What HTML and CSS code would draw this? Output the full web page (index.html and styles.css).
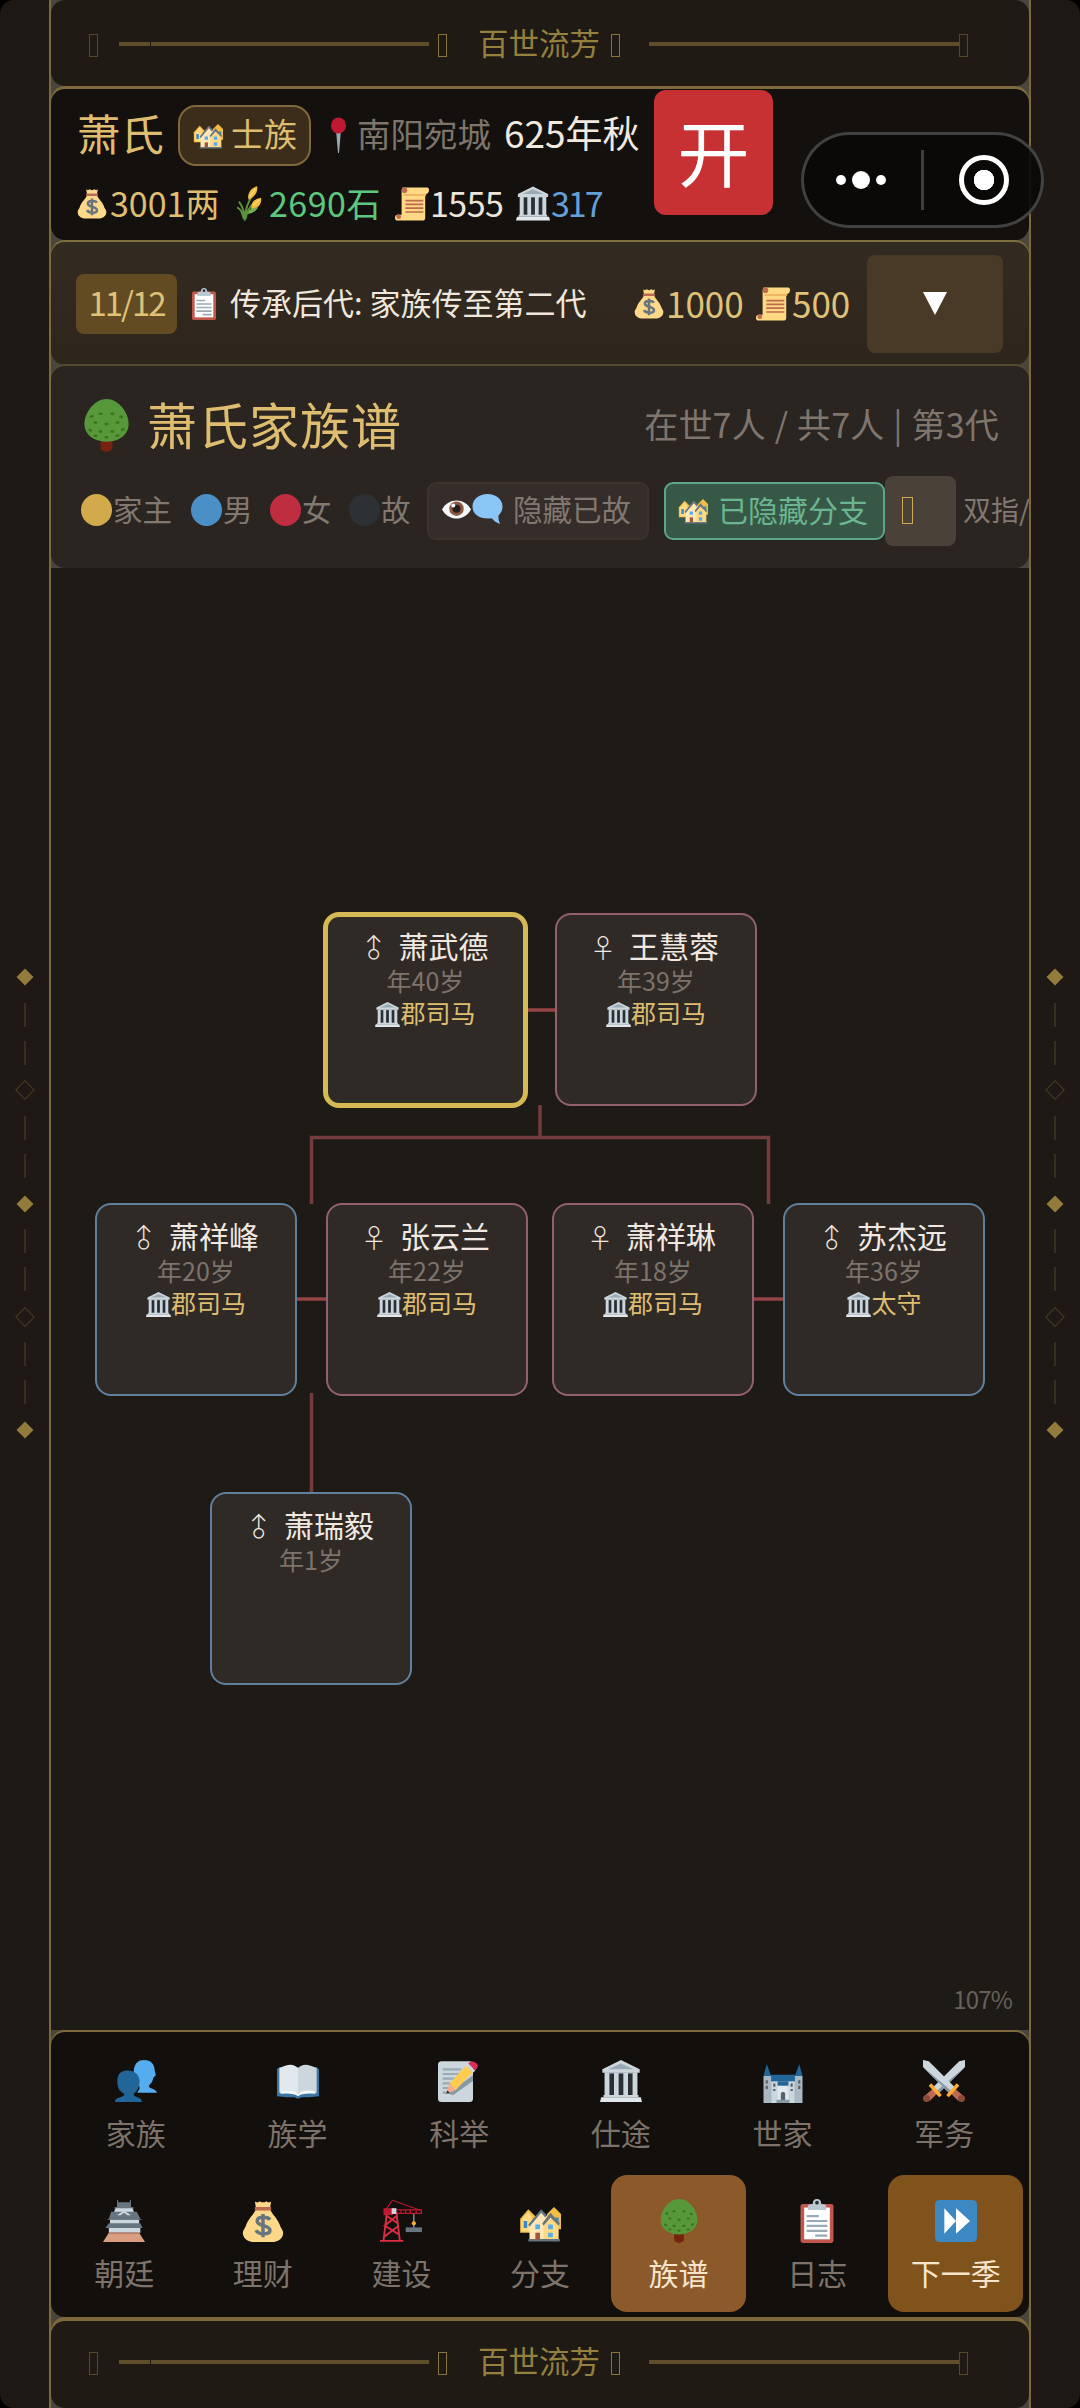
FILE: index.html
```html
<!DOCTYPE html>
<html lang="zh-CN">
<head>
    <meta charset="UTF-8">
    <meta name="viewport" content="width=device-width, initial-scale=1.0">
    <title>百世流芳</title>
    <link rel="stylesheet" href="styles.css">
</head>
<body>
    <svg class="sprite" aria-hidden="true">
        <symbol id="houses" viewBox="0 0 36 36">
            <path fill="#f4bd42" d="M1 16l7-8 6 6v14H1z"/>
            <path fill="#ffd983" d="M2 17l6-7 3 4v13H2z"/>
            <path fill="#f4bd42" d="M24 12l6-6 6 6v13H24z"/>
            <path fill="#3b88c3" d="M4 18h3v6H4zM31 15h3v4h-3z"/>
            <path fill="#ffe8b6" d="M9 34V20l10-11 5 5v20z"/>
            <path fill="#ffd983" d="M21 34V20l6-7 7 8v13z"/>
            <path fill="#66757f" d="M8 21L19 8l5 5-1.500 2L19 11 9 23zM20 20l7-9 8 9-1 2-7-7-6 7zM8 33.500h27v2H8z"/>
            <path fill="#55acee" d="M14 21h4v4h-4zM25 21h4v4h-4zM25 28h4v4h-4z"/>
            <path fill="#a0573f" d="M14 28h4v6h-4z"/>
        </symbol>
        <symbol id="pin" viewBox="0 0 15 36">
            <path fill="#99aab5" d="M5 13h5L8 36H7z"/>
            <ellipse cx="7.500" cy="8.500" rx="7.500" ry="8" fill="#be1931"/>
        </symbol>
        <symbol id="bag" viewBox="0 0 36 36">
            <path fill="#fdd888" d="M12 8h12c2 5 7 8 9 15 1 2 3 4 2 7-1 4-5 6-9 6H10c-4 0-8-2-9-6-1-3 1-5 2-7 2-7 7-10 9-15z"/>
            <path fill="#fdd888" d="M11 1q2 2 4 0 3 2 6 0 2 2 4 0l-1 6H12z"/>
            <path fill="#bf6952" d="M11 6h14v3H11z"/>
            <path fill="none" stroke="#67757f" stroke-width="3" d="M24 17c-2-3-11-3-11 1 0 5 11 3 11 8 0 4-10 4-12 0M18 12v20"/>
        </symbol>
        <symbol id="wheat" viewBox="0 0 26 36">
            <path fill="none" stroke="#5c913b" stroke-width="2" d="M8 36C8 25 11 16 18 7M8 36c0-8-2-15-6-20M9 34c1-8 5-13 9-17M7 34C5 26 4 24 0 22"/>
            <path fill="#f4bd42" d="M12 14C10 7 16 1 21 0c1 6-3 12-9 14zM15 24c-1-8 4-11 10-12 1 7-3 11-10 12z"/>
            <path fill="#77b255" d="M11 29c1-5 6-7 11-7-2 4-6 6-11 7z"/>
            <path fill="none" stroke="#ffe8a0" d="M13 11l6-8M17 20l6-6"/>
        </symbol>
        <symbol id="scroll" viewBox="0 0 36 36">
            <path fill="#ffd983" d="M8 1h26q2 0 2 3t-3 4h-1v25q0 3-3 3H3q-3 0-3-3t3-3h4V4z"/>
            <path fill="#f0b45f" d="M9 8h24v2H9z"/>
            <circle cx="10" cy="4" r="3" fill="#c1694f"/>
            <circle cx="4" cy="32" r="2.500" fill="#c1694f"/>
            <path fill="none" stroke="#c1694f" stroke-width="1.800" d="M11 15h19M11 19h19M11 23h19M11 27h19"/>
        </symbol>
        <symbol id="temple" viewBox="0 0 36 36">
            <path fill="#66757f" d="M4 10h28v20H4z"/>
            <path fill="#292f33" d="M8 12h20v18H8z"/>
            <path fill="#ccd6dd" d="M18 0l16 8v3H2V8z"/>
            <path fill="#9aaab4" d="M18 3l11 5H7z"/>
            <path fill="#ccd6dd" d="M4 11h4v19H4zM12 11h4v19h-4zM20 11h4v19h-4zM28 11h4v19h-4zM3 30h30v2H3z"/>
            <path fill="#e1e8ed" d="M1 32h34l1 4H0z"/>
        </symbol>
        <symbol id="clipboard" viewBox="0 0 27 36">
            <rect y="4" width="27" height="32" rx="2" fill="#c1574c"/>
            <path fill="#fff" d="M3 7h21v26H3z"/>
            <path fill="#bcc8d1" d="M6 9V6q0-2 4-2 0-4 3.500-4T17 4q4 0 4 2v3z"/>
            <circle cx="13.500" cy="3" r="1.500" fill="#292f33"/>
            <path fill="none" stroke="#99aab5" stroke-width="1.800" d="M5 14h10M5 18h17M5 22h17M5 26h17M12 30h10"/>
        </symbol>
        <symbol id="tree" viewBox="0 0 30 36">
            <path fill="#77230f" d="M11 27h8v7q-4 4-8 0z"/>
            <path fill="#57983b" d="M15 0c8 0 15 9 15 17 0 7-6 12-15 12S0 24 0 17C0 9 7 0 15 0z"/>
            <path fill="none" stroke="#3e721d" stroke-width="1.700" stroke-linecap="round" d="M10.500 10h1M18.500 10h1M4.500 12l1-.4M24.500 12l1 .4M7 16h1M14.500 17h1M22 16h1M3.500 21l1 .4M10.500 22h1M18.500 22h1M25.500 21l1-.4M7 25h1M14.500 26h1M22 25h1"/>
        </symbol>
        <symbol id="eye" viewBox="0 0 36 36">
            <path fill="#f5f8fa" d="M0 18C8 3 28 3 36 18 28 33 8 33 0 18z"/>
            <circle cx="18" cy="17" r="9" fill="#8a5a40"/>
            <circle cx="18" cy="17" r="5" fill="#231f20"/>
            <circle cx="14" cy="13" r="2.500" fill="#f5f8fa"/>
        </symbol>
        <symbol id="bubble" viewBox="0 0 36 36">
            <path fill="#89c5f5" d="M18 0c10 0 18 6 18 15 0 5-2 8-5 11q0 5 2 10-7-3-10-7C11 31 0 26 0 15 0 6 8 0 18 0z"/>
        </symbol>
        <symbol id="people" viewBox="0 0 36 36">
            <path fill="#55acee" d="M19 28c2-3 2-2 2-5-3-3-5-6-5-12 0-7 3-11 9-11s9 4 9 9l1 4-2 2c-1 4-2 5-4 7 0 3 6 2 7 6z"/>
            <path fill="#226699" d="M0 36c0-5 8-3 8-7-4-2-6-5-6-11C2 11 6 9 11 9s10 3 10 9c0 5-2 9-5 11 0 4 7 2 7 7z"/>
        </symbol>
        <symbol id="book" viewBox="0 0 36 36">
            <path fill="#3b75a0" d="M0 8l2-2h32l2 2v23q-9 1-15 1-3 2-6 0Q9 32 0 31z"/>
            <path fill="#e1e8ed" d="M2 7q11-6 16 0v22q-6-5-16-1z"/>
            <path fill="#ccd6dd" d="M34 7q-11-6-16 0v22q6-5 16-1z"/>
            <path fill="#f5f8fa" d="M3 27q11-3 15 2 4-5 15-2v2q-11-1-15 2-4-3-15-2z"/>
        </symbol>
        <symbol id="memo" viewBox="0 0 36 36">
            <rect x="0" y="1" width="30" height="35" rx="3" fill="#ccd6dd"/>
            <path fill="none" stroke="#99aab5" stroke-width="1.800" d="M4 8h16M4 12h14M4 16h12M4 20h10M4 24h6M4 28h11"/>
            <path fill="#8899a6" d="M8 29l22-16v5L13 30z"/>
            <path fill="#ffcc4d" d="M10 20L24 5l6 5-15 16z"/>
            <path fill="#f4ab8c" d="M10 20l5 6-8 3z"/>
            <path fill="#292f33" d="M8 26l2 2-3 1z"/>
            <path fill="#ccd6dd" d="M24 5l2-2 6 6-2 2z"/>
            <path fill="#dd2e5a" d="M26 3c3-4 9 0 8 3l-2 3z"/>
        </symbol>
        <symbol id="castle" viewBox="0 0 36 36">
            <path fill="#226699" d="M3 0l4 11H0zM33 0l3 11h-7zM6 10h24v7H6z"/>
            <path fill="#a9b8c3" d="M0 11h7v25H0zM29 11h7v25h-7z"/>
            <path fill="#ccd6dd" d="M7 16h22v20H7z"/>
            <path fill="#e1e8ed" d="M13 20h10v16H13z"/>
            <path fill="#226699" d="M13 16h10v4H13z"/>
            <path fill="#55606b" d="M16 27q2-3 4 0v7h-4zM2 15h2v3H2zM2 20h2v3H2zM32 15h2v3h-2zM32 20h2v3h-2zM9 18h2v3H9zM25 18h2v3h-2zM9 23h2v2H9zM25 23h2v2h-2z"/>
            <path fill="#8899a6" d="M12 33h12v3H12z"/>
        </symbol>
        <symbol id="swords" viewBox="0 0 36 36">
            <g id="sword">
                <path fill="#ccd6dd" d="M36 0v6L13 29l-5-5L31 1z"/>
                <path fill="#8899a6" d="M36 6L13 29l-2-2z"/>
                <path fill="#bf6952" d="M8 25l4 4-6 6-5-4z"/>
                <path fill="none" stroke="#ffac33" stroke-width="3" d="M6 21l9 10"/>
                <circle cx="3" cy="33" r="3" fill="#8a4b38"/>
            </g>
            <use href="#sword" transform="matrix(-1 0 0 1 36 0)"/>
        </symbol>
        <symbol id="pagoda" viewBox="0 0 36 36">
            <path fill="#66757f" d="M12 0h1v2h10V0h1v6h2v3H10V6h2z"/>
            <path fill="#ccd6dd" d="M11 7h14l2 4H9z"/>
            <path fill="#66757f" d="M7 10h22l3 6 2 1H3l2-1z"/>
            <path fill="#ccd6dd" d="M12 13l6-4 6 4h-3l-3-2-3 2z"/>
            <path fill="#ccd6dd" d="M6 17h25v4H6zM5 24h27v4H5z"/>
            <path fill="#66757f" d="M5 20h27l2 4H2z"/>
            <path fill="#d99e82" d="M5 28h26l5 8H0z"/>
            <path fill="#b07058" d="M5 28h26l1 1H4z"/>
        </symbol>
        <symbol id="crane" viewBox="0 0 36 36">
            <path fill="none" stroke="#dd2e44" stroke-width="1.600" d="M6 10L3 35M14 10l3 25M5 13l10 7M15 13L4 22l13 8M16 22L3 32M0 35h20"/>
            <path fill="none" stroke="#be1931" d="M10 1L4 10M10 0l25 9"/>
            <path fill="none" stroke="#be1931" d="M13 8.500h23M13 11.500h23M18 8v4M22 8v4M26 8v4M31 8v4M35.500 8v4"/>
            <path fill="#be1931" d="M3 7h8v6H3z"/>
            <path fill="#ccd6dd" d="M10 7h4v5h-4z"/>
            <path stroke="#99aab5" d="M29 12v12"/>
            <circle cx="29" cy="20" r="1.800" fill="#ffac33"/>
            <path fill="#66757f" d="M22 23.500h14v4H22z"/>
        </symbol>
        <symbol id="forward" viewBox="0 0 36 36">
            <rect width="36" height="36" rx="4" fill="#3b88c3"/>
            <path fill="#fff" d="M8 7l10 11L8 29zM18 7l12 11-12 11z"/>
        </symbol>
    </svg>

    <div class="frame">
        <aside class="side">
            <i class="diamond"></i><i class="dash"></i><i class="dash"></i>
            <i class="diamond hollow"></i><i class="dash"></i><i class="dash"></i>
            <i class="diamond"></i><i class="dash"></i><i class="dash"></i>
            <i class="diamond hollow"></i><i class="dash"></i><i class="dash"></i>
            <i class="diamond"></i>
        </aside>

        <main class="main">
            <div class="banner">
                <i class="tofu dim"></i><span class="rule left"></span><i class="tofu"></i>
                <span class="motto">百世流芳</span>
                <i class="tofu"></i><span class="rule"></span><i class="tofu dim"></i>
            </div>

            <header class="header">
                <div class="info">
                    <div class="info-row">
                        <span class="family">萧氏</span>
                        <span class="rank"><svg class="ico"><use href="#houses"/></svg>士族</span>
                        <span class="place"><svg class="ico pin"><use href="#pin"/></svg>南阳宛城</span>
                        <span class="date">625年秋</span>
                    </div>
                    <div class="info-row stats">
                        <span class="stat money"><svg class="ico"><use href="#bag"/></svg>3001两</span>
                        <span class="stat grain"><svg class="ico"><use href="#wheat"/></svg>2690石</span>
                        <span class="stat fame"><svg class="ico"><use href="#scroll"/></svg>1555</span>
                        <span class="stat power"><svg class="ico"><use href="#temple"/></svg>317</span>
                    </div>
                </div>
                <div class="seal">开</div>
            </header>

            <section class="goal">
                <span class="goal-count">11/12</span>
                <svg class="ico clip"><use href="#clipboard"/></svg>
                <span class="goal-text">传承后代: 家族传至第二代</span>
                <span class="reward"><svg class="ico"><use href="#bag"/></svg>1000</span>
                <span class="reward second"><svg class="ico"><use href="#scroll"/></svg>500</span>
                <button class="toggle"><i class="arrow"></i></button>
            </section>

            <section class="title-panel">
                <div class="title-row">
                    <svg class="ico title-tree"><use href="#tree"/></svg>
                    <h1>萧氏家族谱</h1>
                    <span class="count">在世7人 / 共7人 | 第3代</span>
                </div>
                <div class="legend">
                    <span class="key head"><i class="dot"></i>家主</span>
                    <span class="key male"><i class="dot"></i>男</span>
                    <span class="key female"><i class="dot"></i>女</span>
                    <span class="key dead"><i class="dot"></i>故</span>
                    <button class="filter"><svg class="ico eye"><use href="#eye"/></svg><svg class="ico bub"><use href="#bubble"/></svg>隐藏已故</button>
                    <button class="filter on"><svg class="ico"><use href="#houses"/></svg>已隐藏分支</button>
                    <button class="reset"><i class="tofu"></i></button>
                    <span class="tip">双指/</span>
                </div>
            </section>

            <section class="canvas">
                <svg class="links" width="978" height="1462" viewBox="51 568 978 1462">
                    <path class="couple" d="M527 1010h28M297 1299h29M754 1299h29"/>
                    <path class="child" d="M540 1105v32.500M311.500 1204v-66.500h457V1204M311.500 1393v99"/>
                </svg>
                <article class="person head n1">
                    <div class="name"><span class="sex m">♂</span>萧武德</div>
                    <div class="age">年40岁</div>
                    <div class="post"><svg class="ico"><use href="#temple"/></svg>郡司马</div>
                </article>
                <article class="person female n2">
                    <div class="name"><span class="sex">♀</span>王慧蓉</div>
                    <div class="age">年39岁</div>
                    <div class="post"><svg class="ico"><use href="#temple"/></svg>郡司马</div>
                </article>
                <article class="person male n3">
                    <div class="name"><span class="sex m">♂</span>萧祥峰</div>
                    <div class="age">年20岁</div>
                    <div class="post"><svg class="ico"><use href="#temple"/></svg>郡司马</div>
                </article>
                <article class="person female n4">
                    <div class="name"><span class="sex">♀</span>张云兰</div>
                    <div class="age">年22岁</div>
                    <div class="post"><svg class="ico"><use href="#temple"/></svg>郡司马</div>
                </article>
                <article class="person female n5">
                    <div class="name"><span class="sex">♀</span>萧祥琳</div>
                    <div class="age">年18岁</div>
                    <div class="post"><svg class="ico"><use href="#temple"/></svg>郡司马</div>
                </article>
                <article class="person male n6">
                    <div class="name"><span class="sex m">♂</span>苏杰远</div>
                    <div class="age">年36岁</div>
                    <div class="post"><svg class="ico"><use href="#temple"/></svg>太守</div>
                </article>
                <article class="person male n7">
                    <div class="name"><span class="sex m">♂</span>萧瑞毅</div>
                    <div class="age">年1岁</div>
                </article>
                <span class="zoom">107%</span>
            </section>

            <nav class="nav">
                <div class="nav-row">
                    <a class="tab"><svg class="ico"><use href="#people"/></svg>家族</a>
                    <a class="tab"><svg class="ico"><use href="#book"/></svg>族学</a>
                    <a class="tab"><svg class="ico"><use href="#memo"/></svg>科举</a>
                    <a class="tab"><svg class="ico"><use href="#temple"/></svg>仕途</a>
                    <a class="tab"><svg class="ico castle"><use href="#castle"/></svg>世家</a>
                    <a class="tab"><svg class="ico"><use href="#swords"/></svg>军务</a>
                </div>
                <div class="nav-row">
                    <a class="tab"><svg class="ico"><use href="#pagoda"/></svg>朝廷</a>
                    <a class="tab"><svg class="ico"><use href="#bag"/></svg>理财</a>
                    <a class="tab"><svg class="ico"><use href="#crane"/></svg>建设</a>
                    <a class="tab"><svg class="ico"><use href="#houses"/></svg>分支</a>
                    <a class="tab active"><svg class="ico"><use href="#tree"/></svg>族谱</a>
                    <a class="tab"><svg class="ico"><use href="#clipboard"/></svg>日志</a>
                    <a class="tab next"><svg class="ico"><use href="#forward"/></svg>下一季</a>
                </div>
            </nav>

            <div class="banner bottom">
                <i class="tofu dim"></i><span class="rule left"></span><i class="tofu"></i>
                <span class="motto">百世流芳</span>
                <i class="tofu"></i><span class="rule"></span><i class="tofu dim"></i>
            </div>
        </main>

        <aside class="side">
            <i class="diamond"></i><i class="dash"></i><i class="dash"></i>
            <i class="diamond hollow"></i><i class="dash"></i><i class="dash"></i>
            <i class="diamond"></i><i class="dash"></i><i class="dash"></i>
            <i class="diamond hollow"></i><i class="dash"></i><i class="dash"></i>
            <i class="diamond"></i>
        </aside>

        <div class="capsule">
            <span class="dots"><i></i><i></i><i></i></span>
            <span class="bar"></span>
            <span class="target"></span>
        </div>
    </div>
</body>
</html>
```
FILE: styles.css
```css
* {
    box-sizing: border-box;
    margin: 0;
    padding: 0;
}
body {
    background: #000;
    color: #ece4da;
    font-family: "Noto Sans CJK SC", "Noto Sans", sans-serif;
    font-weight: 400;
    line-height: 1;
}
button {
    border: none;
    font: inherit;
    color: inherit;
}
.sprite {
    position: absolute;
    width: 0;
    height: 0;
}
.ico {
    display: block;
    flex: none;
    width: 30px;
    height: 34px;
}
.frame {
    position: relative;
    display: flex;
    width: 1080px;
    height: 2408px;
}

/* side borders */
.side {
    display: flex;
    flex-direction: column;
    align-items: center;
    justify-content: center;
    width: 51px;
    padding-bottom: 1px;
    background: #1e1914;
    border-right: 2px solid #7d693b;
    border-radius: 14px 0 0 14px;
}
.main + .side {
    padding-right: 1px;
    border-right: none;
    border-left: 2px solid #7d693b;
    border-radius: 0 14px 14px 0;
}
.diamond, .dash {
    display: flex;
    align-items: center;
    justify-content: center;
    width: 20px;
    height: 37.7px;
}
.diamond::before {
    content: "";
    width: 12px;
    height: 12px;
    background: #937b3c;
    transform: rotate(45deg);
}
.diamond.hollow::before {
    background: none;
    border: 1px solid #4a3c22;
}
.dash::before {
    content: "";
    width: 2px;
    height: 24px;
    background: #382e20;
}

.main {
    display: flex;
    flex-direction: column;
    width: 978px;
    background: #4a463c;
}

/* top and bottom banner */
.banner {
    display: flex;
    align-items: center;
    height: 86px;
    padding: 2px 59px 0 38px;
    background: #1f1a14;
    border-radius: 14px;
}
.tofu {
    flex: none;
    width: 9px;
    height: 23px;
    margin-top: 3px;
    border: 1px solid #8a7336;
}
.tofu.dim {
    border-color: #57472a;
}
.rule {
    flex: none;
    width: 310px;
    height: 4px;
    margin-left: 29px;
    background: #5f4e2c;
}
.rule.left {
    margin: 0 9px 0 21px;
    background: linear-gradient(to right, #5f4e2c 31px, #1f1a14 31px, #1f1a14 32px, #5f4e2c 32px);
}
.motto {
    margin: -4px 11px 0 31px;
    font-size: 30.5px;
    color: #94803f;
}

/* header */
.header {
    display: flex;
    height: 151px;
    margin-top: 3px;
    padding-left: 26px;
    background: #13100d;
    border-radius: 14px;
    box-shadow: 0 -3px #7d693b;
}
.info {
    width: 577px;
    padding-top: 16px;
}
.info-row {
    display: flex;
    align-items: center;
    height: 61px;
    white-space: nowrap;
}
.family {
    width: 101px;
    margin-top: -6px;
    font-size: 43.5px;
    color: #dfbd70;
}
.rank {
    display: flex;
    align-items: center;
    width: 133px;
    height: 61px;
    padding: 0 0 4px 13px;
    border: 2px solid #80683d;
    border-radius: 18px;
    background: #3b2d19;
    color: #dfbd70;
    font-size: 33px;
}
.rank .ico {
    margin-right: 8px;
}
.place {
    display: flex;
    align-items: center;
    width: 193px;
    margin-top: -5px;
    padding-left: 20px;
    font-size: 33.5px;
    color: #7d746b;
}
.ico.pin {
    width: 15px;
    height: 36px;
    margin: 3px 11px 0 0;
}
.date {
    margin-top: -6px;
    font-size: 37px;
    color: #f1e9df;
}
.stats {
    height: 60px;
    padding-top: 13px;
    font-size: 34px;
}
.stat {
    display: flex;
    align-items: center;
}
.stat .ico {
    margin: 2px 3px 0 0;
    height: 35px;
}
.money {
    width: 160px;
    color: #dfbd70;
}
.grain {
    width: 158px;
    color: #5cc77d;
    letter-spacing: 0.5px;
}
.grain .ico {
    width: 25px;
    margin-right: 7px;
}
.fame {
    width: 121px;
    letter-spacing: -0.5px;
}
.fame .ico, .power .ico {
    width: 34px;
    margin-right: 1px;
}
.power {
    color: #64a0d8;
    letter-spacing: -2px;
}
.seal {
    width: 119px;
    height: 125px;
    margin-top: 1px;
    border-radius: 12px;
    background: #c83133;
    color: #fff;
    font-size: 72px;
    line-height: 119px;
    text-align: center;
}

/* current goal */
.goal {
    display: flex;
    align-items: center;
    height: 123px;
    margin-top: 2px;
    padding-left: 25px;
    background: linear-gradient(to bottom, #332a21, #2e261c);
    border-radius: 14px;
    box-shadow: 0 -2px #80703f;
    white-space: nowrap;
}
.goal-count {
    width: 101px;
    height: 60px;
    border-radius: 8px;
    background: #624a22;
    color: #dfc278;
    font-size: 33px;
    letter-spacing: -2px;
    line-height: 56px;
    text-align: center;
}
.clip {
    width: 24px;
    height: 32px;
    margin-left: 15px;
}
.goal-text {
    width: 404px;
    margin: -4px 0 0 14px;
    font-size: 31px;
    color: #efe7dc;
}
.reward {
    display: flex;
    align-items: center;
    width: 122px;
    margin-top: -2px;
    font-size: 35px;
    color: #dfc278;
}
.reward .ico {
    height: 35px;
    margin: 2px 2px 0 0;
}
.second {
    width: 111px;
}
.second .ico {
    width: 34px;
}
.toggle {
    display: flex;
    align-items: center;
    justify-content: center;
    width: 136px;
    height: 98px;
    border-radius: 8px;
    background: #483a26;
}
.arrow {
    border: 12px solid transparent;
    border-top: 23px solid #fff;
    border-bottom: none;
}

/* genealogy title and legend */
.title-panel {
    height: 202px;
    margin-top: 1px;
    background: #2a2521;
    border-radius: 14px;
    box-shadow: 0 -2px #554a32;
    overflow: hidden;
}
.title-row {
    display: flex;
    align-items: center;
    height: 60px;
    margin-top: 29px;
    padding: 0 30px 0 33px;
}
.title-tree {
    width: 45px;
    height: 53px;
}
h1 {
    margin: -4px 0 0 18px;
    font-size: 50px;
    font-weight: 400;
    letter-spacing: 1px;
    color: #dfbd70;
}
.count {
    margin: -2px 0 0 auto;
    font-size: 34px;
    letter-spacing: 0.2px;
    word-spacing: 1px;
    color: #7f756d;
}
.legend {
    display: flex;
    align-items: center;
    height: 70px;
    margin-top: 19px;
    padding-left: 30px;
    font-size: 29.5px;
    color: #82786f;
    white-space: nowrap;
}
.key {
    display: flex;
    align-items: center;
    flex: none;
    gap: 1px;
}
.dot {
    width: 31px;
    height: 32px;
    margin-top: 2px;
    border-radius: 50%;
}
.key.head { width: 110px; }
.key.male { width: 79px; }
.key.female { width: 79px; }
.key.dead { width: 78px; }
.head .dot { background: #d2aa4b; }
.male .dot { background: #4a90c6; }
.female .dot { background: #be2d40; }
.dead .dot { background: #2d3136; }
.filter {
    display: flex;
    align-items: center;
    flex: none;
    width: 222px;
    height: 58px;
    margin: 3px 15px 0 0;
    padding: 0 0 3px 13px;
    border: 2px solid #3a332e;
    border-radius: 9px;
    background: #342d29;
}
.filter .eye {
    width: 29px;
    height: 29px;
}
.filter .bub {
    width: 31px;
    height: 30px;
    margin: 0 10px 0 1px;
}
.filter.on {
    width: 221px;
    margin-right: 0;
    padding-left: 12px;
    border-color: #5ba787;
    background: #385847;
    color: #6bb590;
    font-size: 30px;
}
.on .ico {
    margin-right: 10px;
}
.reset {
    flex: none;
    width: 71px;
    height: 70px;
    margin-top: 3px;
    padding-left: 17px;
    border-radius: 8px;
    background: #4a4138;
}
.reset .tofu {
    display: block;
    width: 11px;
    height: 27px;
    margin-top: 0;
    border-color: #cfa955;
}
.tip {
    margin-left: 7px;
    font-size: 28px;
}

/* family tree */
.canvas {
    position: relative;
    height: 1462px;
    background: #1e1b16;
}
.links {
    position: absolute;
    left: 0;
    top: 0;
    fill: none;
    stroke-width: 3.5;
}
.couple { stroke: #964347; }
.child { stroke: #733c3d; }
.person {
    position: absolute;
    width: 202px;
    height: 193px;
    padding-top: 15px;
    border: 2px solid #5f7f9f;
    border-radius: 16px;
    background: #302a26;
    text-align: center;
}
.person.female {
    border-color: #93606f;
}
.person.head {
    width: 205px;
    height: 196px;
    padding-top: 13px;
    border: 5px solid #d4b955;
}
.n1 { left: 272px; top: 344px; }
.n2 { left: 504px; top: 345px; }
.n3 { left: 44px; top: 635px; }
.n4 { left: 275px; top: 635px; }
.n5 { left: 501px; top: 635px; }
.n6 { left: 732px; top: 635px; }
.n7 { left: 159px; top: 924px; }
.name {
    display: flex;
    align-items: center;
    justify-content: center;
    height: 30px;
    padding-right: 3px;
    font-size: 30px;
    color: #f1e9e1;
}
.sex {
    width: 26px;
    margin: 4px 13px 0 0;
    font-size: 26px;
    font-weight: 300;
}
.sex.m {
    transform: rotate(-45deg);
}
.age {
    margin-top: 8px;
    font-size: 25px;
    color: #7d736a;
}
.post {
    display: flex;
    justify-content: center;
    margin-top: 7px;
    font-size: 25px;
    color: #dfbd70;
}
.post .ico {
    width: 25px;
    height: 25px;
    margin-top: 2px;
}
.zoom {
    position: absolute;
    right: 17px;
    bottom: 19px;
    font-size: 24px;
    letter-spacing: -0.8px;
    color: #67615a;
}

/* bottom navigation */
.nav {
    display: flex;
    flex-direction: column;
    gap: 3px;
    height: 285px;
    margin-top: 2px;
    padding: 3px 6px;
    background: #120f0c;
    border-radius: 14px;
    box-shadow: 0 -2px #7d693b;
}
.nav-row {
    display: flex;
    gap: 4px;
}
.tab {
    display: flex;
    flex: 1;
    flex-direction: column;
    align-items: center;
    height: 137px;
    padding-top: 24px;
    border-radius: 16px;
    font-size: 30px;
    color: #7d736a;
}
.tab .ico {
    width: 42px;
    height: 44px;
    margin-bottom: 14px;
}
.tab .ico.castle {
    height: 39px;
    margin-top: 5px;
}
.tab.active {
    background: #8c5a2a;
    color: #f7e5cb;
}
.tab.next {
    background: #80521c;
    color: #f7e5cb;
}
.bottom {
    height: 87px;
    margin-top: 4px;
    padding-top: 0;
    padding-bottom: 5px;
    box-shadow: 0 -4px #7d693b;
}

/* mini program menu */
.capsule {
    position: absolute;
    left: 801px;
    top: 132px;
    display: flex;
    align-items: center;
    width: 243px;
    height: 96px;
    padding-left: 32px;
    border: 3px solid rgba(75, 75, 75, 0.85);
    border-radius: 48px;
    background: rgba(10, 9, 8, 0.9);
}
.dots {
    display: flex;
    align-items: center;
    gap: 6px;
    width: 85px;
}
.dots i {
    width: 10px;
    height: 10px;
    border-radius: 50%;
    background: #fff;
}
.dots i:nth-child(2) {
    width: 18px;
    height: 18px;
}
.bar {
    width: 3px;
    height: 60px;
    background: #3f3f3f;
}
.target {
    width: 50px;
    height: 50px;
    margin-left: 35px;
    border: 5px solid #fff;
    border-radius: 50%;
    background: radial-gradient(circle, #fff 10px, transparent 10.5px);
}
```
